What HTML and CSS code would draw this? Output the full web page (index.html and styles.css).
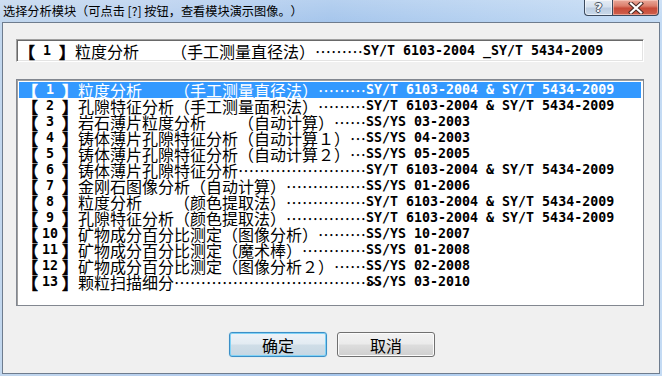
FILE: index.html
```html
<!DOCTYPE html>
<html lang="zh-CN">
<head>
<meta charset="utf-8">
<title>选择分析模块</title>
<link rel="stylesheet" href="styles.css">
</head>
<body>
<div class="window">
  <div class="titlebar">
    <div class="title">选择分析模块（可点击 [?] 按钮，查看模块演示图像。）</div>
    <div class="caption">
      <div class="cap-btn cap-help"><span class="help-glyph">?</span></div>
      <div class="cap-btn cap-close">
        <svg width="16" height="12" viewBox="0 0 16 12">
          <path d="M3 1.5 L13 10.5 M13 1.5 L3 10.5" stroke="#4a2a26" stroke-width="4.2" stroke-linecap="square" fill="none"/>
          <path d="M3 1.5 L13 10.5 M13 1.5 L3 10.5" stroke="#ffffff" stroke-width="2.2" stroke-linecap="square" fill="none"/>
        </svg>
      </div>
    </div>
  </div>
  <div class="client">
    <div class="topbox">
      <div class="entry">
        <span class="lbl"><span class="br">【</span><span class="lt num">1</span><span class="br">】</span></span>
        <span class="nm"><span class="cj">粒度分析　　（手工测量直径法）</span><span class="cj dots">………</span></span>
        <span class="lt">SY/T 6103-2004 _SY/T 5434-2009</span>
      </div>
    </div>
    <div class="list">
      <div class="entry sel">
        <span class="lbl"><span class="br">【</span><span class="lt num">1</span><span class="br">】</span></span>
        <span class="nm"><span class="cj">粒度分析　　（手工测量直径法）</span><span class="cj dots">………</span></span>
        <span class="lt">SY/T 6103-2004 &amp; SY/T 5434-2009</span>
      </div>
      <div class="entry">
        <span class="lbl"><span class="br">【</span><span class="lt num">2</span><span class="br">】</span></span>
        <span class="nm"><span class="cj">孔隙特征分析（手工测量面积法）</span><span class="cj dots">………</span></span>
        <span class="lt">SY/T 6103-2004 &amp; SY/T 5434-2009</span>
      </div>
      <div class="entry">
        <span class="lbl"><span class="br">【</span><span class="lt num">3</span><span class="br">】</span></span>
        <span class="nm"><span class="cj">岩石薄片粒度分析　　（自动计算）</span><span class="cj dots">……</span></span>
        <span class="lt">SS/YS 03-2003</span>
      </div>
      <div class="entry">
        <span class="lbl"><span class="br">【</span><span class="lt num">4</span><span class="br">】</span></span>
        <span class="nm"><span class="cj">铸体薄片孔隙特征分析（自动计算１）</span><span class="cj dots">…</span></span>
        <span class="lt">SS/YS 04-2003</span>
      </div>
      <div class="entry">
        <span class="lbl"><span class="br">【</span><span class="lt num">5</span><span class="br">】</span></span>
        <span class="nm"><span class="cj">铸体薄片孔隙特征分析（自动计算２）</span><span class="cj dots">…</span></span>
        <span class="lt">SS/YS 05-2005</span>
      </div>
      <div class="entry">
        <span class="lbl"><span class="br">【</span><span class="lt num">6</span><span class="br">】</span></span>
        <span class="nm"><span class="cj">铸体薄片孔隙特征分析</span><span class="cj dots">……………………</span></span>
        <span class="lt">SY/T 6103-2004 &amp; SY/T 5434-2009</span>
      </div>
      <div class="entry">
        <span class="lbl"><span class="br">【</span><span class="lt num">7</span><span class="br">】</span></span>
        <span class="nm"><span class="cj">金刚石图像分析（自动计算）</span><span class="cj dots">……………</span></span>
        <span class="lt">SS/YS 01-2006</span>
      </div>
      <div class="entry">
        <span class="lbl"><span class="br">【</span><span class="lt num">8</span><span class="br">】</span></span>
        <span class="nm"><span class="cj">粒度分析　　（颜色提取法）</span><span class="cj dots">……………</span></span>
        <span class="lt">SY/T 6103-2004 &amp; SY/T 5434-2009</span>
      </div>
      <div class="entry">
        <span class="lbl"><span class="br">【</span><span class="lt num">9</span><span class="br">】</span></span>
        <span class="nm"><span class="cj">孔隙特征分析（颜色提取法）</span><span class="cj dots">……………</span></span>
        <span class="lt">SY/T 6103-2004 &amp; SY/T 5434-2009</span>
      </div>
      <div class="entry">
        <span class="lbl"><span class="br">【</span><span class="lt num">10</span><span class="br">】</span></span>
        <span class="nm"><span class="cj">矿物成分百分比测定（图像分析）</span><span class="cj dots">………</span></span>
        <span class="lt">SS/YS 10-2007</span>
      </div>
      <div class="entry">
        <span class="lbl"><span class="br">【</span><span class="lt num">11</span><span class="br">】</span></span>
        <span class="nm"><span class="cj">矿物成分百分比测定（魔术棒）</span><span class="cj dots">…………</span></span>
        <span class="lt">SS/YS 01-2008</span>
      </div>
      <div class="entry">
        <span class="lbl"><span class="br">【</span><span class="lt num">12</span><span class="br">】</span></span>
        <span class="nm"><span class="cj">矿物成分百分比测定（图像分析２）</span><span class="cj dots">……</span></span>
        <span class="lt">SS/YS 02-2008</span>
      </div>
      <div class="entry">
        <span class="lbl"><span class="br">【</span><span class="lt num">13</span><span class="br">】</span></span>
        <span class="nm"><span class="cj">颗粒扫描细分</span><span class="cj dots">…………………………………</span></span>
        <span class="lt">SS/YS 03-2010</span>
      </div>
    </div>
    <div class="btns">
      <button class="btn btn-default">确定</button>
      <button class="btn btn-normal">取消</button>
    </div>
  </div>
</div>
</body>
</html>
```
FILE: styles.css
```css
* { box-sizing: border-box; }
html, body { margin: 0; padding: 0; }
body {
  width: 662px;
  height: 376px;
  overflow: hidden;
  font-family: "Noto Sans CJK SC", sans-serif;
  background: #b9d1ea;
  font-kerning: none;
  text-spacing-trim: space-all;
}
.window {
  width: 662px;
  height: 376px;
  display: flex;
  flex-direction: column;
  padding: 0 2px 2px 2px;
  background:
    linear-gradient(180deg, rgba(255,255,255,0.18) 0px, rgba(255,255,255,0) 22px),
    linear-gradient(90deg, #c2d7ee 0%, #b7cfee 25%, #a6c6ec 50%, #b4d0f0 72%, #c4dbf4 100%);
}
.titlebar {
  height: 22px;
  display: flex;
  align-items: flex-start;
  flex: none;
}
.title {
  flex: 1;
  font-size: 12.2px;
  line-height: 22px;
  padding-left: 1px;
  color: #000;
  white-space: nowrap;
}
.caption {
  display: flex;
  margin-right: 1px;
}
.cap-btn {
  height: 16px;
  display: flex;
  align-items: center;
  justify-content: center;
  border: 1px solid #3b4a5e;
  border-top: none;
}
.cap-help {
  width: 28px;
  border-radius: 0 0 0 4px;
  border-right: none;
  background: linear-gradient(180deg, #e4ecf5 0%, #d5e1ee 45%, #bccde1 55%, #c9d9ea 100%);
  box-shadow: inset 0 0 0 1px rgba(255,255,255,0.55);
}
.help-glyph {
  font-family: "DejaVu Sans", sans-serif;
  font-weight: bold;
  font-size: 13px;
  line-height: 14px;
  color: #f4f6f8;
  text-shadow: 1px 0 0 #4b5563, -1px 0 0 #4b5563, 0 1px 0 #4b5563, 0 -1px 0 #4b5563;
}
.cap-close {
  width: 47px;
  border-radius: 0 0 4px 0;
  background: linear-gradient(180deg, #e9a99b 0%, #dc7e6c 40%, #c74a38 55%, #d0604c 100%);
  box-shadow: inset 0 0 0 1px rgba(255,220,210,0.5);
}
.client {
  flex: 1;
  background: #f0f0f0;
  border: 1px solid #6e7c8e;
  display: flex;
  flex-direction: column;
  padding: 16px 15px 0 13px;
}
.topbox {
  height: 23px;
  background: #fff;
  border: 1px solid;
  border-color: #a0a0a0 #ffffff #ffffff #a0a0a0;
  box-shadow: inset 1px 1px 0 #696969, inset -1px -1px 0 #e3e3e3;
  display: flex;
  align-items: center;
  padding-left: 2px;
}
.list {
  margin-top: 17px;
  height: 227px;
  background: #fff;
  border: 1px solid #828790;
  box-shadow: inset 1px 1px 0 #a0a0a0;
  padding: 2px 2px 2px 2px;
}
.entry {
  height: 16px;
  display: flex;
  align-items: center;
  white-space: pre;
  color: #000;
}
.list .entry { padding-left: 3px; }
.entry.sel {
  background: #3399ff;
  color: #fff;
}
.cj {
  font-family: "Noto Sans CJK SC", sans-serif;
  font-size: 16px;
  line-height: 16px;
}
.lt {
  font-family: "DejaVu Sans Mono", monospace;
  font-weight: bold;
  font-size: 13.3px;
  line-height: 16px;
}
.lbl {
  display: flex;
  align-items: center;
  width: 56px;
  flex: none;
}
.br {
  width: 16px;
  flex: none;
  text-align: center;
  font-family: "Noto Sans CJK SC", sans-serif;
  font-size: 16px;
  line-height: 16px;
  -webkit-text-stroke: 0.6px currentColor;
}
.num {
  width: 24px;
  flex: none;
  text-align: center;
}
.nm {
  display: flex;
  align-items: center;
  width: 288px;
  flex: none;
}
.dots {
  flex: 1;
  text-align: right;
}
.btns {
  display: flex;
  justify-content: center;
  gap: 10px;
  margin-top: 26px;
  padding-left: 4px;
}
.btn {
  width: 98px;
  height: 25px;
  margin: 0;
  padding: 0;
  border-radius: 3px;
  font-family: "Noto Sans CJK SC", sans-serif;
  font-size: 16px;
  line-height: 20px;
  color: #000;
  display: flex;
  align-items: center;
  justify-content: center;
}
.btn-default {
  border: 1px solid #3c8fc7;
  box-shadow: inset 0 0 0 1px #7fd2f6, 0 0 1px #7fd2f6;
  background: linear-gradient(180deg, #eef3f8 0%, #e2ebf2 48%, #cfdde7 52%, #c6d7e3 100%);
}
.btn-normal {
  border: 1px solid #707070;
  box-shadow: inset 0 0 0 1px #fbfbfb;
  background: linear-gradient(180deg, #f2f2f2 0%, #ebebeb 48%, #dddddd 52%, #cfcfcf 100%);
}
```
